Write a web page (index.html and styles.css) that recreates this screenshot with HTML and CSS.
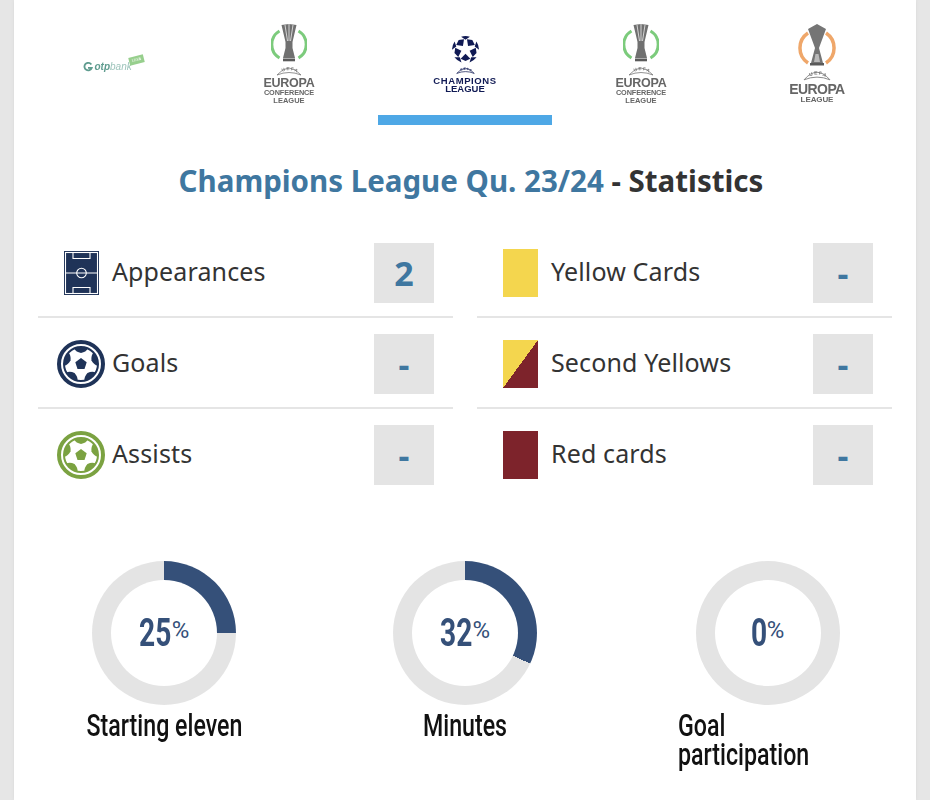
FILE: index.html
```html
<!DOCTYPE html>
<html lang="en">
<head>
<meta charset="utf-8">
<title>Statistics</title>
<link rel="stylesheet" href="styles.css">
</head>
<body>
<svg class="defs" width="0" height="0">
  <defs>
    <g id="conf">
      <path d="M8.500 7 A15.700 15.700 0 0 0 8.500 34 M27.500 7 A15.700 15.700 0 0 1 27.500 34" fill="none" stroke="#7ccb7c" stroke-width="3"/>
      <path d="M10.500 1 L18 0 L25.500 1 L21.500 18 L21.500 24 L24 34 L12 34 L14.500 24 L14.500 18 Z" fill="#707070"/>
      <path d="M14 1 L16.500 17 M18 0 V17 M22 1 L19.500 17" stroke="#fff" stroke-width=".7"/>
      <rect x="12" y="34.500" width="12" height="2.800" fill="#5a5a5a"/>
    </g>
    <g id="patch-ball">
      <path d="M17 8.500 Q24 6 31 8.500 Q29 12 24 13 Q19 12 17 8.500Z" fill="currentColor"/>
    </g>
    <g id="ball">
      <circle cx="24" cy="24" r="22" fill="#fff" stroke="currentColor" stroke-width="4"/>
      <circle cx="24" cy="24" r="17" fill="none" stroke="currentColor" stroke-width="2"/>
      <use href="#patch-ball"/>
      <use href="#patch-ball" transform="rotate(72 24 24)"/>
      <use href="#patch-ball" transform="rotate(144 24 24)"/>
      <use href="#patch-ball" transform="rotate(216 24 24)"/>
      <use href="#patch-ball" transform="rotate(288 24 24)"/>
      <path d="M24 18 L29.700 22.300 L27.500 29 L20.500 29 L18.300 22.300Z" fill="currentColor"/>
    </g>
    <path id="uefa-curve" d="M3 9.200 Q13 1.200 23 9.200"/>
    <g id="cl-wedge">
      <path d="M15 10.500 L20 5.500 L15 3 L10 5.500Z" transform="rotate(36 15 15)"/>
      <path d="M10.500 1.700 Q15 .4 19.500 1.700 L15 5Z"/>
    </g>
  </defs>
</svg>
<main class="page">
  <nav class="tabs">
    <a class="tab">
      <span class="otp">
        <svg class="otp-g" viewBox="0 0 12 12"><path d="M10 3 A4.500 4.500 0 1 0 10.500 7 L6 7" fill="none" stroke="#5f9c8f" stroke-width="2.200"/></svg>
        <b>otp</b><i>bank</i>
        <em>LIGA</em>
      </span>
    </a>
    <a class="tab">
      <span class="logo">
        <svg class="trophy" viewBox="0 0 36 38"><use href="#conf"/></svg>
        <svg class="uefa" viewBox="0 0 26 12"><path d="M1 10 Q13 -4 25 10 Q13 5 1 10Z" fill="none" stroke="#777" stroke-width=".8"/><text class="uefa-t"><textPath href="#uefa-curve" startOffset="4">UEFA</textPath></text></svg>
        <span class="l-main">EUROPA</span>
        <span class="l-sub">CONFERENCE</span>
        <span class="l-sub l-low">LEAGUE</span>
      </span>
    </a>
    <a class="tab active">
      <span class="logo cl">
        <svg class="cl-ball" viewBox="0 0 30 30">
          <g fill="#101a54">
            <use href="#cl-wedge"/>
            <use href="#cl-wedge" transform="rotate(72 15 15)"/>
            <use href="#cl-wedge" transform="rotate(144 15 15)"/>
            <use href="#cl-wedge" transform="rotate(216 15 15)"/>
            <use href="#cl-wedge" transform="rotate(288 15 15)"/>
          </g>
        </svg>
        <svg class="uefa cl-u" viewBox="0 0 26 12"><path d="M1 10 Q13 -4 25 10 Q13 5 1 10Z" fill="none" stroke="#101a54" stroke-width="1"/><text class="uefa-t cl-t"><textPath href="#uefa-curve" startOffset="4">UEFA</textPath></text></svg>
        <span class="l-cl">CHAMPIONS</span>
        <span class="l-cl l-cl2">LEAGUE</span>
      </span>
    </a>
    <a class="tab">
      <span class="logo">
        <svg class="trophy" viewBox="0 0 36 38"><use href="#conf"/></svg>
        <svg class="uefa" viewBox="0 0 26 12"><path d="M1 10 Q13 -4 25 10 Q13 5 1 10Z" fill="none" stroke="#777" stroke-width=".8"/><text class="uefa-t"><textPath href="#uefa-curve" startOffset="4">UEFA</textPath></text></svg>
        <span class="l-main">EUROPA</span>
        <span class="l-sub">CONFERENCE</span>
        <span class="l-sub l-low">LEAGUE</span>
      </span>
    </a>
    <a class="tab">
      <span class="logo">
        <svg class="trophy el" viewBox="0 0 40 42">
          <path d="M11 9 A18 18 0 0 0 11 39 M29 9 A18 18 0 0 1 29 39" fill="none" stroke="#efa76a" stroke-width="3.500"/>
          <path d="M11 5 L20 0 L29 5 L22 24 L26 39 L14 39 L18 24Z" fill="#757575"/>
          <path d="M18.500 30 L21.500 30 L23 38 L17 38Z" fill="#fff" opacity=".5"/>
          <rect x="13" y="39" width="14" height="2.500" fill="#5a5a5a"/>
        </svg>
        <svg class="uefa el-u" viewBox="0 0 26 12"><path d="M1 10 Q13 -4 25 10 Q13 5 1 10Z" fill="none" stroke="#777" stroke-width=".8"/><text class="uefa-t"><textPath href="#uefa-curve" startOffset="4">UEFA</textPath></text></svg>
        <span class="l-main l-el">EUROPA</span>
        <span class="l-sub l-el2">LEAGUE</span>
      </span>
    </a>
  </nav>

  <h2 class="title"><span class="blue">Champions League Qu. 23/24</span> - Statistics</h2>

  <section class="stats">
    <div class="row">
      <span class="ico"><svg class="pitch" viewBox="0 0 35 44"><rect width="35" height="44" fill="#1f3358"/><g fill="none" stroke="#fff" stroke-width="1.100"><rect x="1.500" y="1.500" width="32" height="41"/><path d="M1.500 22H33.500"/><circle cx="17.500" cy="22" r="4.800"/><path d="M9 1.500V7.500H26V1.500M9 42.500V36.500H26V42.500"/></g></svg></span>
      <span class="label">Appearances</span><span class="val">2</span>
    </div>
    <div class="row">
      <span class="ico"><span class="card yellow"></span></span>
      <span class="label">Yellow Cards</span><span class="val">-</span>
    </div>
    <div class="row">
      <span class="ico"><svg class="ball navy" viewBox="0 0 48 48"><use href="#ball"/></svg></span>
      <span class="label">Goals</span><span class="val">-</span>
    </div>
    <div class="row">
      <span class="ico"><span class="card split"></span></span>
      <span class="label">Second Yellows</span><span class="val">-</span>
    </div>
    <div class="row">
      <span class="ico"><svg class="ball green" viewBox="0 0 48 48"><use href="#ball"/></svg></span>
      <span class="label">Assists</span><span class="val">-</span>
    </div>
    <div class="row">
      <span class="ico"><span class="card red"></span></span>
      <span class="label">Red cards</span><span class="val">-</span>
    </div>
  </section>

  <section class="rings">
    <figure class="ring-box">
      <div class="ring r25"><span class="pct"><span class="num">25</span><small>%</small></span></div>
      <figcaption><span>Starting eleven</span></figcaption>
    </figure>
    <figure class="ring-box">
      <div class="ring r32"><span class="pct"><span class="num">32</span><small>%</small></span></div>
      <figcaption><span>Minutes</span></figcaption>
    </figure>
    <figure class="ring-box third">
      <div class="ring r0"><span class="pct"><span class="num one">0</span><small>%</small></span></div>
      <figcaption class="left"><span>Goal<br>participation</span></figcaption>
    </figure>
  </section>
</main>
</body>
</html>
```

FILE: styles.css
```css
* { box-sizing: border-box; }
html, body { margin: 0; height: 800px; overflow: hidden; }
body { background: #e6e6e6; font-family: "Noto Sans", "Open Sans", sans-serif; color: #333; }
.defs { position: absolute; }
.page { width: 902px; height: 800px; margin-left: 14px; background: #fff; padding: 0 24px; box-shadow: 0 0 3px #d8d8d8; }

.tabs { display: grid; grid-template-columns: repeat(5, 176px); margin-left: -13px; height: 125px; }
.tab { display: flex; justify-content: center; align-items: flex-start; height: 125px; }
.tab.active { border-bottom: 10px solid #4ea8e6; margin: 0 1px; }
.logo { display: flex; flex-direction: column; align-items: center; font-family: "Liberation Sans", sans-serif; font-weight: 700; color: #666; margin-top: 24px; line-height: 1; filter: blur(.3px); }
.trophy { width: 36px; height: 38px; display: block; }
.trophy.el { width: 40px; height: 42px; }
.uefa { width: 26px; height: 12px; margin-top: 3px; display: block; }
.uefa-t { font-size: 4.600px; font-weight: 700; letter-spacing: 1px; fill: #777; }
.cl-t { fill: #101a54; }
.el-u { width: 28px; height: 13px; margin-top: 3px; }
.l-main { font-size: 12.500px; line-height: 12px; letter-spacing: -.25px; }
.l-sub { font-size: 7.300px; line-height: 7.500px; letter-spacing: -.1px; }
.l-low { font-size: 7.500px; letter-spacing: 0; }
.l-el { font-size: 14px; line-height: 13px; letter-spacing: -.6px; margin-top: 1px; }
.l-el2 { font-size: 8px; }
.cl { margin-top: 35px; color: #101a54; }
.cl-ball { width: 29px; height: 29px; display: block; }
.cl-u { width: 19px; height: 9px; margin-top: 2px; }
.l-cl { font-size: 9.500px; line-height: 8px; letter-spacing: .6px; margin-top: 2px; }
.l-cl2 { margin-top: 0; letter-spacing: 0; }
.otp { margin-top: 55px; display: flex; align-items: center; position: relative; font-size: 10px; color: #5f9c8f; font-family: "Liberation Sans", sans-serif; line-height: 24px; width: 61px; filter: blur(.3px); }
.otp-g { width: 10px; height: 10px; margin-right: 2px; }
.otp b { font-style: italic; color: #5f9c8f; }
.otp i { color: #9dc4bb; }
.otp em { position: absolute; right: 0; top: 1px; width: 15px; text-align: center; background: #97cf8d; color: #fff; font-size: 4px; font-style: normal; line-height: 8px; transform: rotate(-14deg); }

.title { margin: 36px 0 0; padding-left: 12px; height: 40px; text-align: center; font-size: 29.500px; line-height: 40px; font-weight: 700; color: #333; }
.blue { color: #3f77a0; }

.stats { display: grid; grid-template-columns: 415px 415px; column-gap: 24px; margin-top: 26px; }
.row { display: flex; align-items: center; height: 91px; padding: 16px 0 13px; border-bottom: 2px solid #e5e5e5; }
.row:nth-child(n+5) { border-bottom-color: transparent; }
.ico { width: 74px; display: flex; justify-content: center; padding-left: 12px; }
.label { flex: 1; font-size: 25px; letter-spacing: .13px; padding-bottom: 4px; }
.val { width: 60px; height: 60px; margin-right: 19px; background: #e4e4e4; color: #3f77a0; font-weight: 700; font-size: 34px; display: flex; align-items: center; justify-content: center; }
.pitch { width: 35px; height: 44px; display: block; }
.ball { width: 48px; height: 48px; display: block; }
.navy { color: #1f3358; }
.green { color: #7ba241; }
.card { display: block; width: 35px; height: 48px; }
.yellow { background: #f4d64e; }
.red { background: #7d232b; }
.split { background: linear-gradient(to top left, #7d232b 50%, #f4d64e 50%); }

.rings { display: grid; grid-template-columns: repeat(3, 1fr); margin: 61px 0 0 -24px; width: 902px; }
.ring-box { margin: 0; display: flex; flex-direction: column; align-items: center; }
.third { padding-left: 4px; }
.ring { width: 144px; height: 144px; border-radius: 50%; display: flex; align-items: center; justify-content: center; position: relative; }
.ring::before { content: ""; position: absolute; inset: 19px; background: #fff; border-radius: 50%; }
.r25 { background: conic-gradient(#355079 0 25%, #e4e4e4 25% 100%); }
.r32 { background: conic-gradient(#355079 0 32%, #e4e4e4 32% 100%); }
.r0 { background: #e4e4e4; }
.pct { position: relative; display: flex; align-items: flex-start; font-family: "Roboto", sans-serif; font-weight: 700; font-size: 38px; line-height: 38px; color: #355079; }
.num { display: block; transform: scaleX(.74); transform-origin: left; margin-right: -10px; }
.num.one { margin-right: -5px; }
.pct small { font-size: 24px; line-height: 24px; font-weight: 400; margin: 4px 0 0 -1px; }
figcaption { margin-top: 6px; font-family: "Roboto", sans-serif; font-weight: 500; font-size: 32px; line-height: 29px; color: #111; text-align: center; }
figcaption span { display: inline-block; white-space: nowrap; transform: scaleX(.725); }
figcaption.left { text-align: left; align-self: flex-start; margin-left: 59px; }
figcaption.left span { transform-origin: left; }
```
